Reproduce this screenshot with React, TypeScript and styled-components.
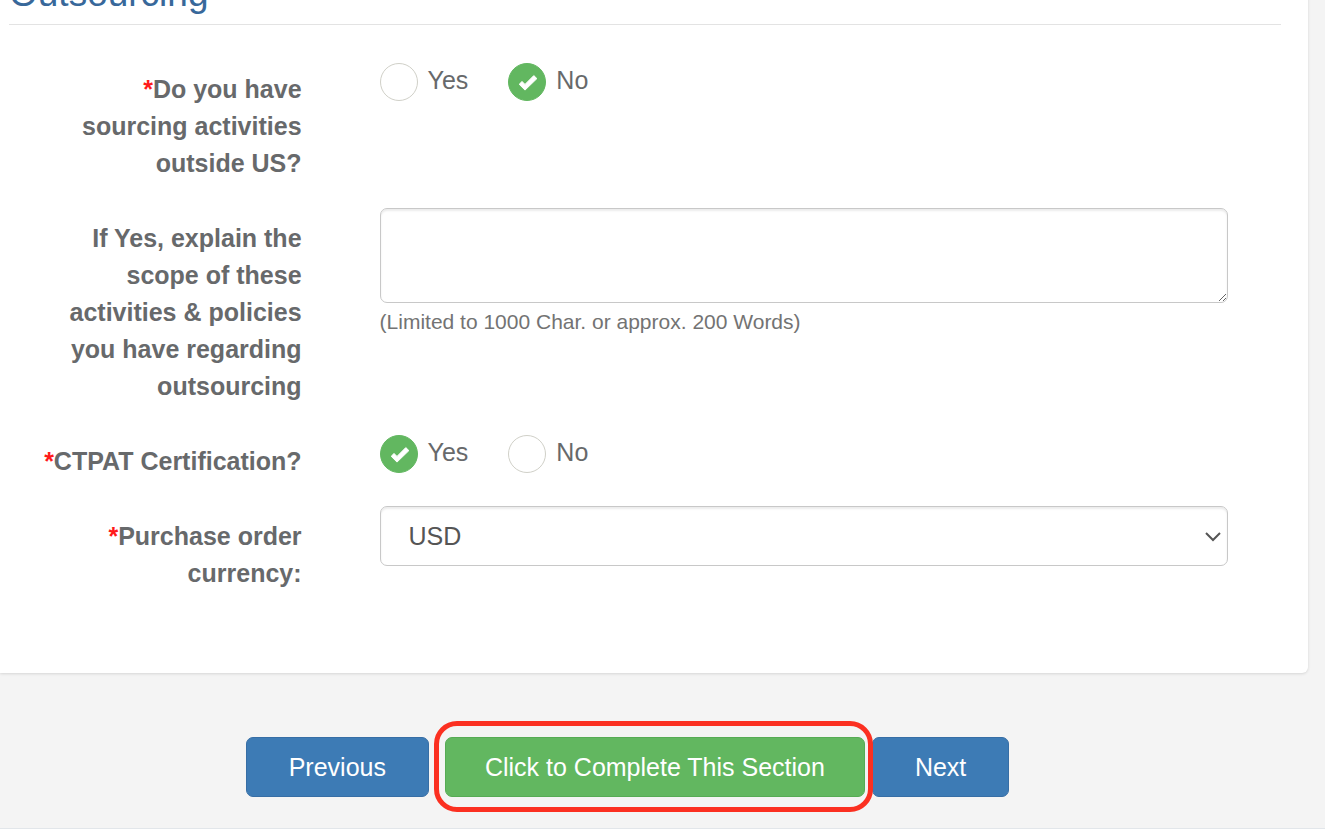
import React, { useState } from "react";
import styled, { createGlobalStyle, css } from "styled-components";

const GlobalStyle = createGlobalStyle`
  *, *::before, *::after { box-sizing: border-box; }
  html { overflow: hidden; }
  body {
    margin: 0;
    background: #f4f4f4;
    color: #67696b;
    font-family: "Liberation Sans", Arial, sans-serif;
    font-size: 25px;
    line-height: 37px;
  }
`;

const Page = styled.div`
  display: flex;
  flex-direction: column;
  min-height: 100vh;
`;

const Card = styled.section`
  margin: -26px 17px 0 0;
  padding: 0 27px 81px 9px;
  background: #fff;
  border-radius: 0 0 6px 0;
  box-shadow: 0 1px 3px rgba(0, 0, 0, 0.12);
`;

const Heading = styled.h2`
  margin: 0 0 34px;
  padding-bottom: 10px;
  border-bottom: 1px solid #e3e3e3;
  color: #38689a;
  font-size: 37px;
  font-weight: 400;
  line-height: 40px;
`;

const Form = styled.form`
  display: flex;
  flex-direction: column;
  gap: 26px;
  padding-right: 53px;
`;

const Row = styled.div`
  display: grid;
  grid-template-columns: 24% minmax(0, 1fr);
  column-gap: 78px;
  align-items: start;
`;

const labelText = css`
  padding: 12px 0 0 22px;
  font-weight: 700;
  text-align: right;
`;

const Label = styled.label`
  ${labelText}
`;

const GroupLabel = styled.div`
  ${labelText}
`;

const Required = styled.span`
  color: #ff1a1a;
`;

const Field = styled.div`
  position: relative;
  display: flex;
  flex-direction: column;
`;

const RadioGroup = styled.div`
  display: flex;
  gap: 40px;
  padding-top: 4px;
`;

const Option = styled.label`
  display: flex;
  gap: 10px;
  line-height: 35px;
`;

const RadioBox = styled.span`
  position: relative;
  display: flex;
  height: 38px;
`;

const Radio = styled.input`
  appearance: none;
  width: 38px;
  height: 38px;
  margin: 0;
  border: 1px solid #d0d0c8;
  border-radius: 50%;
  background: #fff;

  &:checked {
    border-color: #62b760;
    background: #62b760;
  }
  & + svg { display: none; }
  &:checked + svg { display: block; }
`;

const Check = styled.svg`
  position: absolute;
  inset: 0;
  pointer-events: none;
`;

const control = css`
  width: 100%;
  border: 1px solid #c8c8c8;
  border-radius: 7px;
  background: #fff;
  box-shadow: inset 0 2px 2px rgba(0, 0, 0, 0.08);
  color: #555;
  font: inherit;
`;

const TextArea = styled.textarea`
  ${control}
  display: block;
  height: 95px;
  padding: 11px 22px;
  resize: vertical;
`;

const Hint = styled.span`
  margin-top: 4px;
  color: #737373;
  font-size: 21px;
  line-height: 30px;
`;

const Select = styled.select`
  ${control}
  appearance: none;
  height: 60px;
  padding: 0 48px 0 28px;
`;

const Chevron = styled.svg`
  position: absolute;
  top: 24px;
  right: 6px;
  pointer-events: none;
`;

const Actions = styled.div`
  display: flex;
  justify-content: center;
  padding: 64px 70px 31px 0;
`;

const Button = styled.button<{ $tone?: "primary" | "success" }>`
  height: 60px;
  padding: 0 ${(p) => (p.$tone === "success" ? 39 : 42)}px;
  border: 1px solid ${(p) => (p.$tone === "success" ? "#56ab54" : "#376ea5")};
  border-radius: 7px;
  background: ${(p) => (p.$tone === "success" ? "#62b760" : "#3d7bb5")};
  color: #fff;
  font: inherit;
  white-space: nowrap;
`;

const Highlight = styled.div`
  position: relative;
  display: flex;
  margin: 0 7px 0 16px;

  &::after {
    content: "";
    position: absolute;
    inset: -16px -8px -15px -11px;
    border: 5px solid #fb3021;
    border-radius: 23px;
    pointer-events: none;
  }
`;

const Footer = styled.footer`
  flex: 1;
  border-top: 1px solid #e2e6ea;
  background: #fff;
`;

function YesNo({
  name,
  labelId,
  initial,
}: {
  name: string;
  labelId: string;
  initial: string;
}) {
  const [value, setValue] = useState(initial);
  return (
    <RadioGroup role="radiogroup" aria-labelledby={labelId}>
      {["Yes", "No"].map((option) => (
        <Option key={option}>
          <RadioBox>
            <Radio
              type="radio"
              name={name}
              value={option}
              checked={value === option}
              onChange={() => setValue(option)}
            />
            <Check width="38" height="38" viewBox="0 0 38 38" aria-hidden="true">
              <path
                d="M11.2 21.3L14 18.5L17 21.4L25.8 12.6L28.9 15.6L17 27.1Z"
                fill="#fff"
                stroke="#fff"
                strokeWidth="1"
                strokeLinejoin="round"
              />
            </Check>
          </RadioBox>
          {option}
        </Option>
      ))}
    </RadioGroup>
  );
}

export default function App() {
  return (
    <>
      <GlobalStyle />
      <Page>
        <Card>
          <Heading>Outsourcing</Heading>
          <Form>
            <Row>
              <GroupLabel id="sourcing-label">
                <Required>*</Required>Do you have sourcing activities outside US?
              </GroupLabel>
              <YesNo name="sourcing" labelId="sourcing-label" initial="No" />
            </Row>
            <Row>
              <Label htmlFor="scope">
                If Yes, explain the scope of these activities &amp; policies you have
                regarding outsourcing
              </Label>
              <Field>
                <TextArea id="scope" aria-describedby="scope-hint" />
                <Hint id="scope-hint">(Limited to 1000 Char. or approx. 200 Words)</Hint>
              </Field>
            </Row>
            <Row>
              <GroupLabel id="ctpat-label">
                <Required>*</Required>CTPAT Certification?
              </GroupLabel>
              <YesNo name="ctpat" labelId="ctpat-label" initial="Yes" />
            </Row>
            <Row>
              <Label htmlFor="currency">
                <Required>*</Required>Purchase order currency:
              </Label>
              <Field>
                <Select id="currency" defaultValue="USD">
                  <option value="USD">USD</option>
                </Select>
                <Chevron width="18" height="14" viewBox="0 0 18 14" aria-hidden="true">
                  <path d="M2 3l7 7 7-7" fill="none" stroke="#555" strokeWidth="2" />
                </Chevron>
              </Field>
            </Row>
          </Form>
        </Card>
        <Actions>
          <Button type="button">Previous</Button>
          <Highlight>
            <Button type="button" $tone="success">
              Click to Complete This Section
            </Button>
          </Highlight>
          <Button type="button">Next</Button>
        </Actions>
        <Footer />
      </Page>
    </>
  );
}
